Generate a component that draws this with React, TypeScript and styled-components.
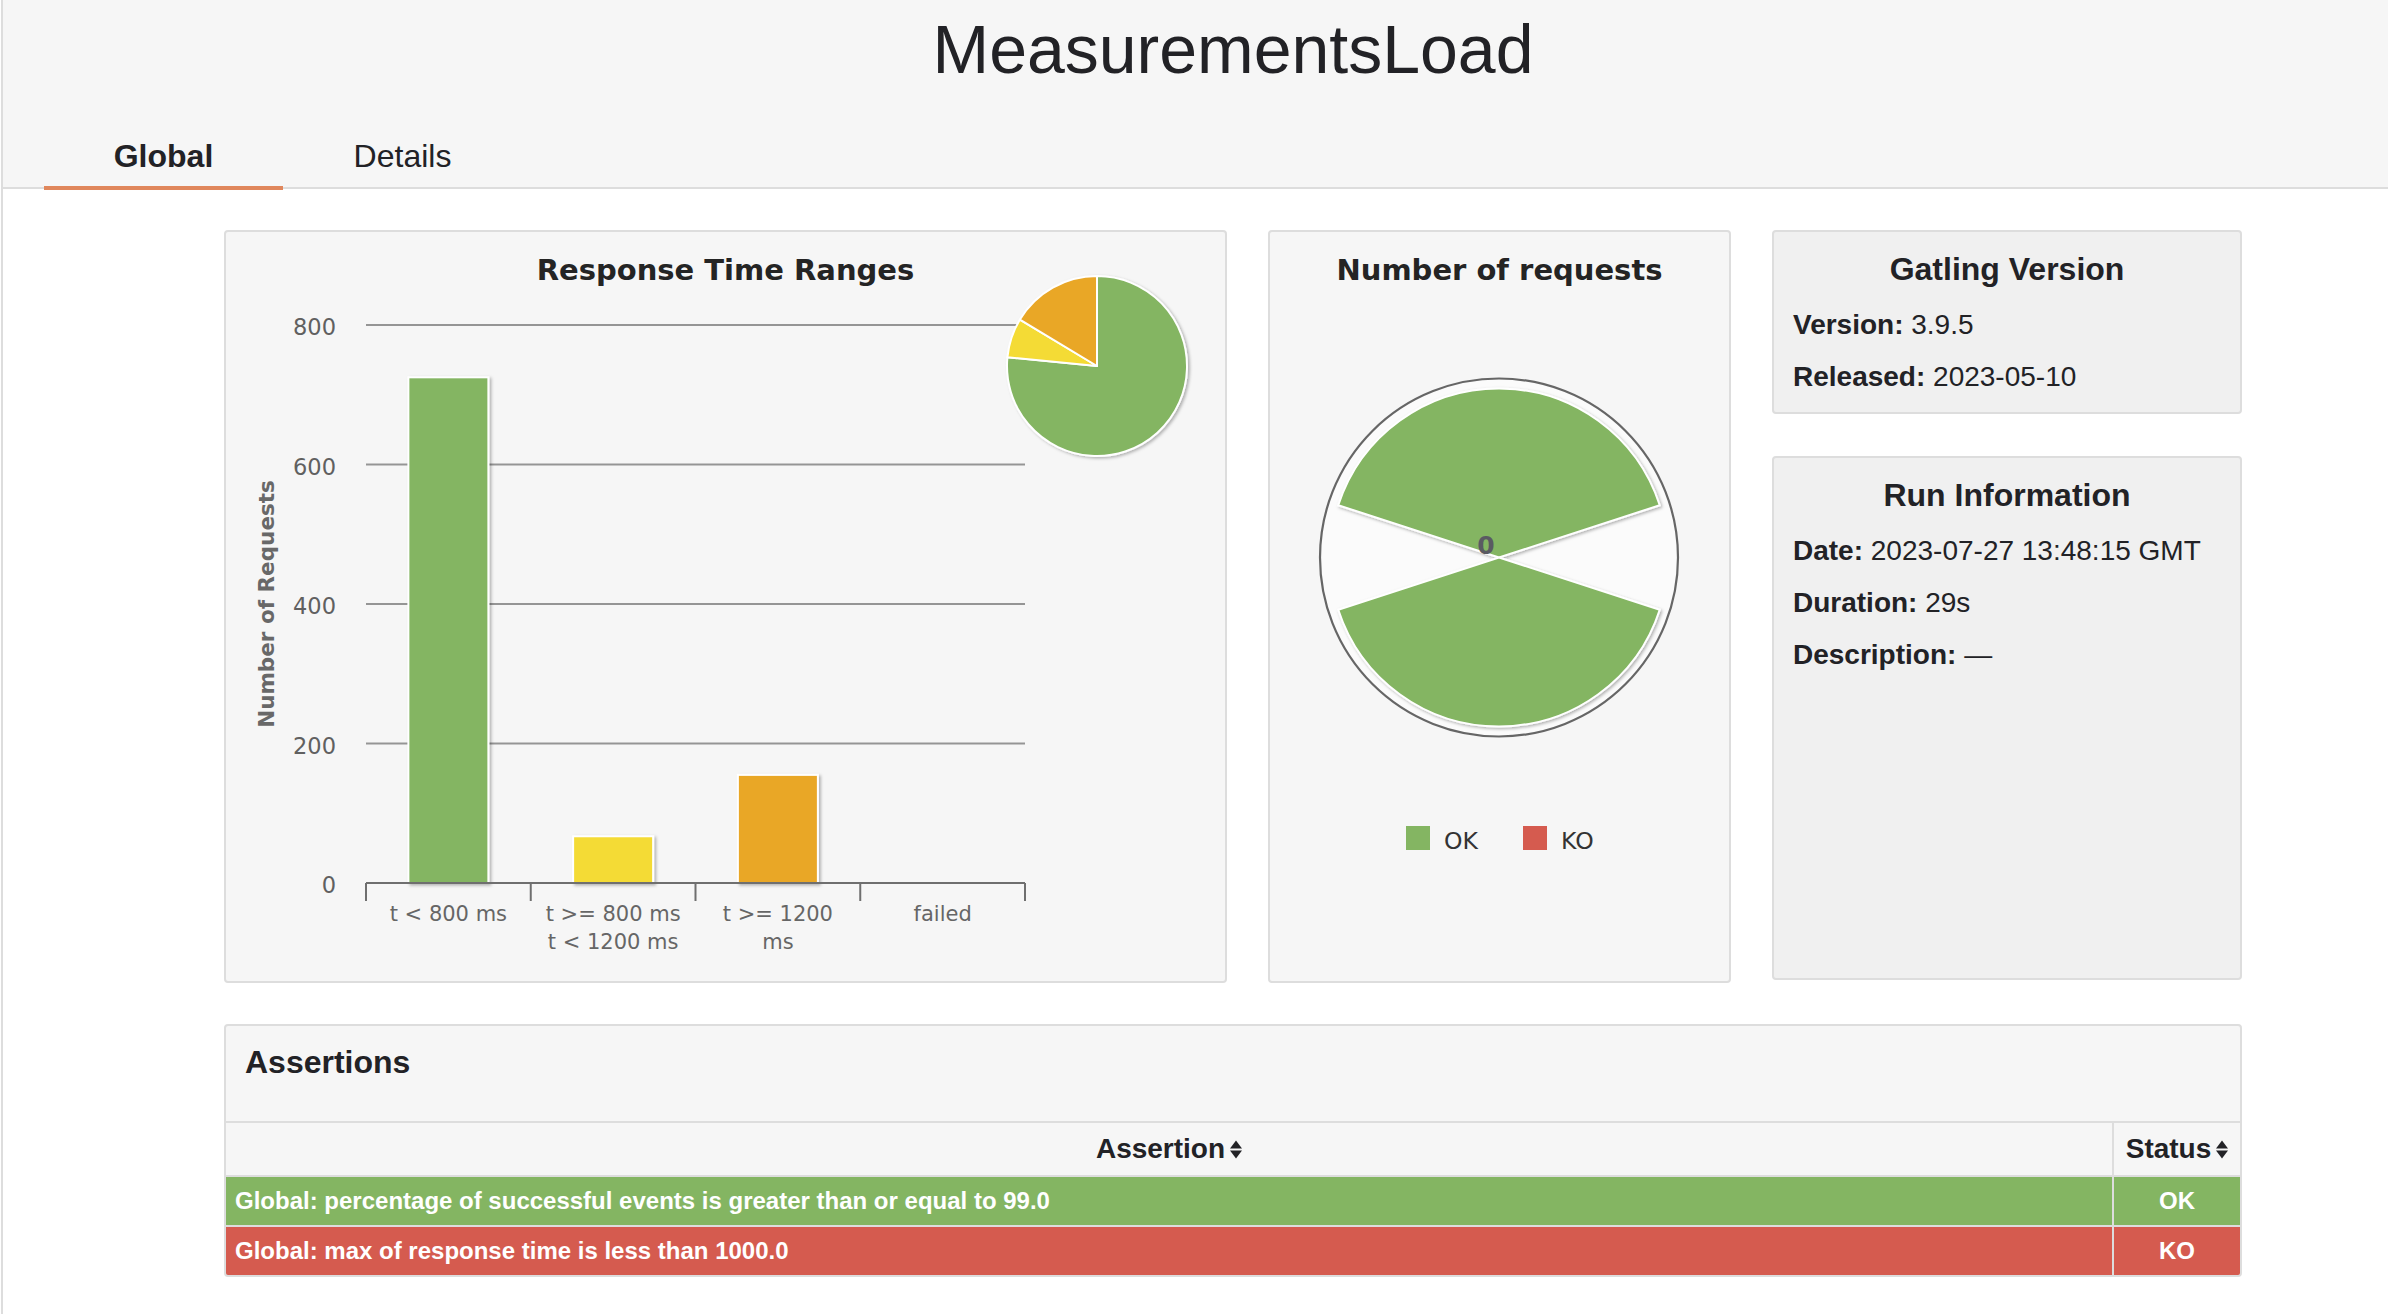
import React from "react";
import styled, { createGlobalStyle } from "styled-components";

const GlobalStyle = createGlobalStyle`
  html, body { margin: 0; padding: 0; background: #ffffff; }
  body {
    font-family: "Liberation Sans", Arial, Helvetica, sans-serif;
    color: #222226;
  }
  * { box-sizing: border-box; }
`;

const COLORS = {
  green: "#84b562",
  yellow: "#f4db35",
  orange: "#e9a728",
  red: "#d55b4f",
  border: "#dddddd",
  text: "#222226",
};

const CHART_FONT = `"DejaVu Sans", "Liberation Sans", sans-serif`;

const Page = styled.div`
  margin-left: 1px;
  border-left: 2px solid ${COLORS.border};
  min-height: 1314px;
`;

const Header = styled.header`
  background: #f6f6f6;
  border-bottom: 2px solid ${COLORS.border};
  padding-top: 11px;
  display: flex;
  flex-direction: column;
`;

const Title = styled.h1`
  margin: 0 0 0 221px;
  width: 2018px;
  text-align: center;
  font-size: 68px;
  line-height: 76px;
  font-weight: 400;
  color: ${COLORS.text};
`;

const Tabs = styled.nav`
  display: flex;
  margin-top: 51px;
  margin-bottom: -3px;
  padding-left: 41px;
`;

const Tab = styled.a<{ $active?: boolean }>`
  position: relative;
  width: 239px;
  text-align: center;
  font-size: 32px;
  line-height: 37px;
  padding-bottom: 11px;
  border-bottom: 4px solid ${(p) => (p.$active ? "#e0875c" : "transparent")};
  font-weight: ${(p) => (p.$active ? 700 : 400)};
  color: ${COLORS.text};
  text-decoration: none;
`;

const Main = styled.main`
  margin-left: 221px;
  width: 2018px;
  padding-top: 41px;
  display: flex;
  flex-direction: column;
  gap: 41px;
`;

const TopRow = styled.div`
  display: flex;
  gap: 41px;
  align-items: flex-start;
`;

const Panel = styled.section<{ $tone?: "chart" | "info" }>`
  background: ${(p) => (p.$tone === "info" ? "#f0f0f0" : "#f6f6f6")};
  border: 2px solid ${COLORS.border};
  border-radius: 4px;
`;

const ChartPanel = styled(Panel)<{ $width: number }>`
  width: ${(p) => p.$width}px;
  height: 753px;
  flex: none;
`;

const ChartTitle = styled.h2`
  margin: 0;
  padding-top: 21px;
  font-family: ${CHART_FONT};
  font-weight: 700;
  font-size: 29px;
  line-height: 34px;
  text-align: center;
  color: #242424;
`;

const ChartSvg = styled.svg`
  display: block;
  overflow: visible;
`;

const SideColumn = styled.div`
  display: flex;
  flex-direction: column;
  gap: 42px;
  width: 470px;
  flex: none;
`;

const InfoPanel = styled(Panel)<{ $minHeight?: number }>`
  padding: 19px 19px 9px;
  min-height: ${(p) => (p.$minHeight ? `${p.$minHeight}px` : "auto")};
`;

const InfoTitle = styled.h2`
  margin: 0;
  text-align: center;
  font-size: 32px;
  line-height: 37px;
  font-weight: 700;
  color: ${COLORS.text};
`;

const InfoList = styled.div`
  margin-top: 11px;
`;

const InfoRow = styled.div`
  font-size: 28px;
  line-height: 52px;
  white-space: nowrap;
  color: ${COLORS.text};
`;

const InfoLabel = styled.span`
  font-weight: 700;
`;

const AssertionsPanel = styled(Panel)`
  overflow: hidden;
`;

const AssertionsTitle = styled.h2`
  margin: 0;
  padding: 18px 19px 40px;
  font-size: 32px;
  line-height: 37px;
  font-weight: 700;
  color: ${COLORS.text};
  border-bottom: 2px solid ${COLORS.border};
`;

const Grid = styled.div`
  display: grid;
  grid-template-columns: 1fr 126px;
  gap: 2px;
  background: ${COLORS.border};
`;

const HeadCell = styled.div`
  height: 52px;
  background: #f6f6f6;
  display: flex;
  align-items: center;
  justify-content: center;
  gap: 5px;
  font-size: 28px;
  line-height: 32px;
  font-weight: 700;
  color: ${COLORS.text};
`;

const Cell = styled.div<{ $status: "ok" | "ko"; $center?: boolean }>`
  height: 48px;
  display: flex;
  align-items: center;
  justify-content: ${(p) => (p.$center ? "center" : "flex-start")};
  padding-left: ${(p) => (p.$center ? "0" : "9px")};
  background: ${(p) => (p.$status === "ok" ? COLORS.green : COLORS.red)};
  color: #ffffff;
  font-size: 24px;
  line-height: 28px;
  font-weight: 700;
  white-space: nowrap;
`;

const SortIcon = () => (
  <svg width="12" height="19" viewBox="0 0 12 19" aria-hidden="true">
    <polygon points="0,8.5 6,0.5 12,8.5" fill="#222226" />
    <polygon points="0,10.5 12,10.5 6,18.5" fill="#222226" />
  </svg>
);

function sector(cx: number, cy: number, r: number, a0: number, a1: number) {
  const rad = (d: number) => (d * Math.PI) / 180;
  const x0 = cx + r * Math.sin(rad(a0));
  const y0 = cy - r * Math.cos(rad(a0));
  const x1 = cx + r * Math.sin(rad(a1));
  const y1 = cy - r * Math.cos(rad(a1));
  const large = a1 - a0 > 180 ? 1 : 0;
  return `M${cx} ${cy} L${x0.toFixed(2)} ${y0.toFixed(2)} A${r} ${r} 0 ${large} 1 ${x1.toFixed(2)} ${y1.toFixed(2)} Z`;
}

const ranges = [
  { label: ["t < 800 ms"], value: 725, color: COLORS.green },
  { label: ["t >= 800 ms", "t < 1200 ms"], value: 67, color: COLORS.yellow },
  { label: ["t >= 1200", "ms"], value: 155, color: COLORS.orange },
  { label: ["failed"], value: 0, color: COLORS.red },
];

const ResponseChart = () => {
  const y0 = 596;
  const scale = 558 / 800;
  const x0 = 140;
  const catW = 164.75;
  const xEnd = x0 + catW * 4;
  const total = ranges.reduce((s, r) => s + r.value, 0);
  let acc = 0;
  const slices = ranges
    .filter((r) => r.value > 0)
    .map((r) => {
      const a0 = (acc / total) * 360;
      acc += r.value;
      const a1 = (acc / total) * 360;
      return { ...r, a0, a1 };
    });
  return (
    <ChartSvg width="999" height="694" viewBox="0 0 999 694">
      <defs>
        <filter id="shadowBars" x="-20%" y="-20%" width="150%" height="150%">
          <feDropShadow dx="2" dy="1.5" stdDeviation="1.6" floodColor="#000" floodOpacity="0.28" />
        </filter>
      </defs>
      {[200, 400, 600, 800].map((v) => (
        <line key={v} x1={x0} x2={xEnd} y1={y0 - v * scale} y2={y0 - v * scale} stroke="#959595" strokeWidth="2" />
      ))}
      {[0, 200, 400, 600, 800].map((v) => (
        <text
          key={v}
          x="110"
          y={y0 - v * scale + 10}
          textAnchor="end"
          fontFamily={CHART_FONT}
          fontSize="22.5"
          fill="#606060"
        >
          {v}
        </text>
      ))}
      <text
        transform="translate(48 317) rotate(-90)"
        textAnchor="middle"
        fontFamily={CHART_FONT}
        fontWeight="700"
        fontSize="21.5"
        fill="#686868"
      >
        Number of Requests
      </text>
      {ranges.map((r, i) =>
        r.value > 0 ? (
          <rect
            key={i}
            x={x0 + catW * (i + 0.5) - 40}
            y={y0 - r.value * scale}
            width="80"
            height={r.value * scale}
            fill={r.color}
            stroke="#ffffff"
            strokeWidth="2"
            filter="url(#shadowBars)"
          />
        ) : null
      )}
      <line x1={x0} x2={xEnd} y1={y0} y2={y0} stroke="#6f6f6f" strokeWidth="2" />
      {[0, 1, 2, 3, 4].map((i) => (
        <line key={i} x1={x0 + catW * i} x2={x0 + catW * i} y1={y0} y2={y0 + 18} stroke="#6f6f6f" strokeWidth="2" />
      ))}
      {ranges.map((r, i) => (
        <text
          key={i}
          textAnchor="middle"
          fontFamily={CHART_FONT}
          fontSize="21"
          fill="#666666"
        >
          {r.label.map((line, j) => (
            <tspan key={j} x={x0 + catW * (i + 0.5)} y={634 + j * 28}>
              {line}
            </tspan>
          ))}
        </text>
      ))}
      <g filter="url(#shadowBars)">
        {slices.map((s, i) => (
          <path
            key={i}
            d={sector(871, 79, 90, s.a0, s.a1)}
            fill={s.color}
            stroke="#ffffff"
            strokeWidth="2"
            strokeLinejoin="round"
          />
        ))}
      </g>
    </ChartSvg>
  );
};

const RequestsChart = () => (
  <ChartSvg width="459" height="694" viewBox="0 0 459 694">
    <defs>
      <filter id="shadowPie" x="-20%" y="-20%" width="140%" height="140%">
        <feDropShadow dx="1.5" dy="1.5" stdDeviation="1.6" floodColor="#000" floodOpacity="0.3" />
      </filter>
    </defs>
    <circle cx="229" cy="270.5" r="179" fill="#fbfbfb" stroke="#666666" strokeWidth="2.2" />
    <g filter="url(#shadowPie)">
      <path d={sector(229, 270.5, 169, -72, 72)} fill={COLORS.green} stroke="#ffffff" strokeWidth="2" />
      <path d={sector(229, 270.5, 169, 108, 252)} fill={COLORS.green} stroke="#ffffff" strokeWidth="2" />
    </g>
    <text x="216" y="267" textAnchor="middle" fontFamily={CHART_FONT} fontWeight="700" fontSize="25" fill="#5a5a62">
      0
    </text>
    <rect x="136" y="539" width="24" height="24" fill={COLORS.green} />
    <text x="174" y="562" fontFamily={CHART_FONT} fontSize="23.5" fill="#333333">
      OK
    </text>
    <rect x="253" y="539" width="24" height="24" fill={COLORS.red} />
    <text x="291" y="562" fontFamily={CHART_FONT} fontSize="23.5" fill="#333333">
      KO
    </text>
  </ChartSvg>
);

const assertions: { text: string; status: "ok" | "ko" }[] = [
  { text: "Global: percentage of successful events is greater than or equal to 99.0", status: "ok" },
  { text: "Global: max of response time is less than 1000.0", status: "ko" },
];

export default function App() {
  return (
    <>
      <GlobalStyle />
      <Page>
        <Header>
          <Title>MeasurementsLoad</Title>
          <Tabs>
            <Tab $active>Global</Tab>
            <Tab>Details</Tab>
          </Tabs>
        </Header>
        <Main>
          <TopRow>
            <ChartPanel $width={1003}>
              <ChartTitle>Response Time Ranges</ChartTitle>
              <ResponseChart />
            </ChartPanel>
            <ChartPanel $width={463}>
              <ChartTitle>Number of requests</ChartTitle>
              <RequestsChart />
            </ChartPanel>
            <SideColumn>
              <InfoPanel $tone="info">
                <InfoTitle>Gatling Version</InfoTitle>
                <InfoList>
                  <InfoRow>
                    <InfoLabel>Version:</InfoLabel> 3.9.5
                  </InfoRow>
                  <InfoRow>
                    <InfoLabel>Released:</InfoLabel> 2023-05-10
                  </InfoRow>
                </InfoList>
              </InfoPanel>
              <InfoPanel $tone="info" $minHeight={524}>
                <InfoTitle>Run Information</InfoTitle>
                <InfoList>
                  <InfoRow>
                    <InfoLabel>Date:</InfoLabel> 2023-07-27 13:48:15 GMT
                  </InfoRow>
                  <InfoRow>
                    <InfoLabel>Duration:</InfoLabel> 29s
                  </InfoRow>
                  <InfoRow>
                    <InfoLabel>Description:</InfoLabel> —
                  </InfoRow>
                </InfoList>
              </InfoPanel>
            </SideColumn>
          </TopRow>
          <AssertionsPanel>
            <AssertionsTitle>Assertions</AssertionsTitle>
            <Grid>
              <HeadCell>
                Assertion
                <SortIcon />
              </HeadCell>
              <HeadCell>
                Status
                <SortIcon />
              </HeadCell>
              {assertions.map((a, i) => (
                <React.Fragment key={i}>
                  <Cell $status={a.status}>{a.text}</Cell>
                  <Cell $status={a.status} $center>
                    {a.status.toUpperCase()}
                  </Cell>
                </React.Fragment>
              ))}
            </Grid>
          </AssertionsPanel>
        </Main>
      </Page>
    </>
  );
}
